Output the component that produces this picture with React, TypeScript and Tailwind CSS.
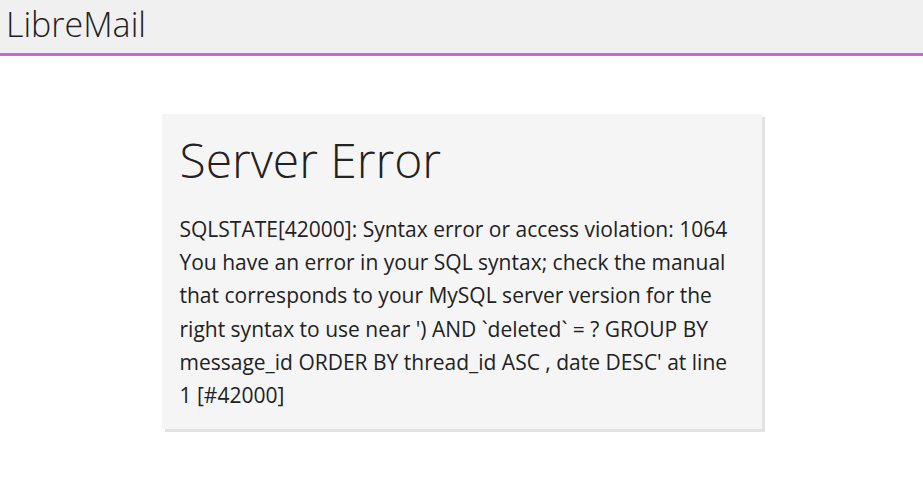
export default function App() {
  return (
    <div className="min-h-screen bg-white font-['Open_Sans',sans-serif] text-[#222]">
      <header className="h-[56px] border-b-[3px] border-[#c36ad8] bg-[#f0f0f0]">
        <h1 className="pl-[6px] text-[34px] font-light leading-[49px] text-[#222]">LibreMail</h1>
      </header>

      <main className="flex justify-center pt-[58px]">
        <div className="w-[600px] bg-[#f5f5f5] px-[18px] pb-[17px] pt-[14px] shadow-[3px_3px_0_#e2e2e2]">
          <h2 className="text-[48px] font-light leading-[64px] text-[#222]">Server Error</h2>
          <p className="mt-[21px] text-[21px] leading-[33.2px] text-[#222]">
            SQLSTATE[42000]: Syntax error or access violation: 1064 You have an error in your SQL syntax; check the
            manual that corresponds to your MySQL server version for the right syntax to use near ') AND `deleted` = ?
            GROUP BY message_id ORDER BY thread_id ASC , date DESC' at line 1 [#42000]
          </p>
        </div>
      </main>
    </div>
  )
}
